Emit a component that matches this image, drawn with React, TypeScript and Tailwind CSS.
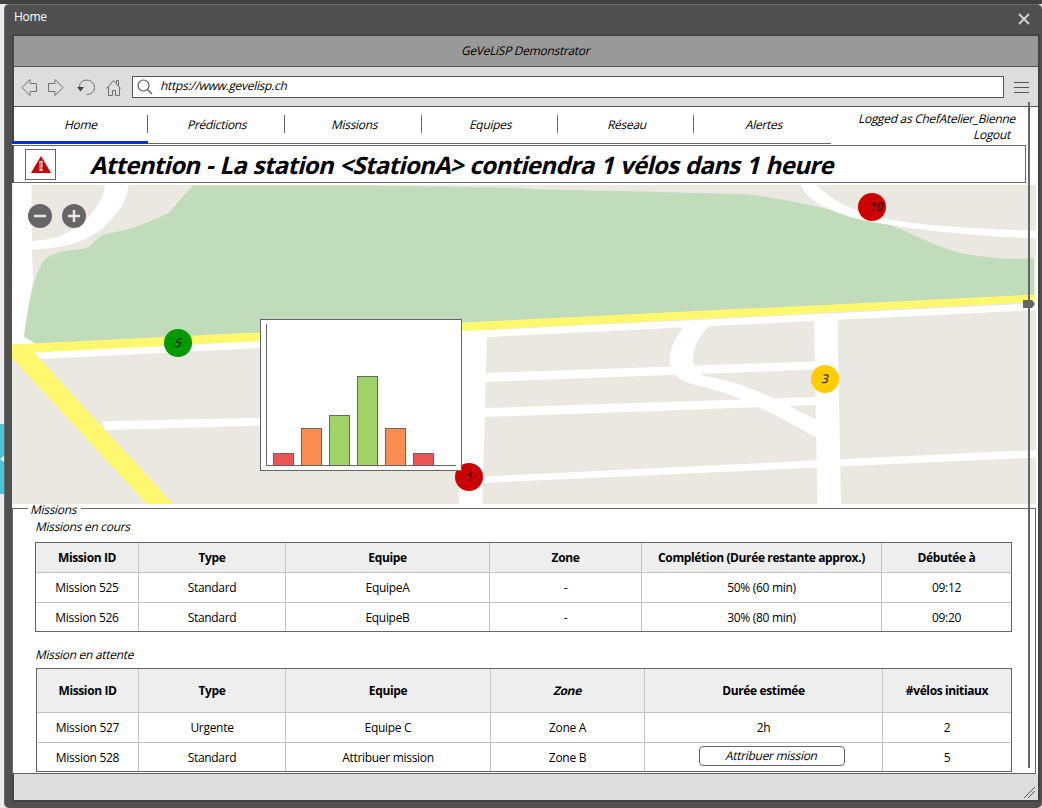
import { type ReactNode } from 'react';

function Slant({ children, className = '' }: { children: ReactNode; className?: string }) {
  return <span className={`inline-block -skew-x-[14deg] whitespace-nowrap ${className}`}>{children}</span>;
}

const tabs = [
  { label: 'Home', box: 'w-[136px]' },
  { label: 'Prédictions', box: 'w-[137px]' },
  { label: 'Missions', box: 'w-[137px]' },
  { label: 'Equipes', box: 'w-[136px]' },
  { label: 'Réseau', box: 'w-[136px]' },
  { label: 'Alertes', box: 'w-[137px]' },
];

const current = {
  widths: ['w-[103px]', 'w-[147px]', 'w-[204px]', 'w-[152px]', 'w-[240px]', 'w-[129px]'],
  head: ['Mission ID', 'Type', 'Equipe', 'Zone', 'Complétion (Durée restante approx.)', 'Débutée à'],
  rows: [
    ['Mission 525', 'Standard', 'EquipeA', '-', '50% (60 min)', '09:12'],
    ['Mission 526', 'Standard', 'EquipeB', '-', '30% (80 min)', '09:20'],
  ],
};

const attribute = (
  <button className="-mt-[5px] ml-[16px] flex h-[20px] w-[146px] items-center justify-center rounded-[4px] border border-[#666] bg-white pt-px">
    <Slant>Attribuer mission</Slant>
  </button>
);

const waiting = {
  widths: ['w-[102px]', 'w-[147px]', 'w-[205px]', 'w-[154px]', 'w-[238px]', 'w-[128px]'],
  head: ['Mission ID', 'Type', 'Equipe', <Slant key="zone">Zone</Slant>, 'Durée estimée', '#vélos initiaux'],
  rows: [
    ['Mission 527', 'Urgente', 'Equipe C', 'Zone A', '2h', '2'],
    ['Mission 528', 'Standard', 'Attribuer mission', 'Zone B', attribute, '5'],
  ],
};

type TableProps = { widths: string[]; head: ReactNode[]; rows: ReactNode[][]; headHeight: string };

function Table({ widths, head, rows, headHeight }: TableProps) {
  const cell = (i: number) =>
    `flex shrink-0 items-center justify-center whitespace-nowrap ${widths[i]} ${i < widths.length - 1 ? 'border-r border-[#c3c3c3]' : ''}`;
  return (
    <div className="w-fit border border-[#666] bg-white">
      <div className={`flex border-b border-[#c3c3c3] bg-[#eee] font-bold tracking-[-0.38px] ${headHeight}`}>
        {head.map((h, i) => (
          <div key={i} className={cell(i)}>{h}</div>
        ))}
      </div>
      {rows.map((r, n) => (
        <div key={n} className={`flex ${n < rows.length - 1 ? 'h-[30px] border-b border-[#c3c3c3]' : 'h-[28px]'}`}>
          {r.map((c, i) => (
            <div key={i} className={`${cell(i)} ${n === rows.length - 1 ? 'pt-[2px]' : ''}`}>{c}</div>
          ))}
        </div>
      ))}
    </div>
  );
}

function Map() {
  return (
    <svg className="block h-[320px] w-[1024px]" viewBox="12 184 1024 320">
      <rect x="12" y="184" width="1024" height="320" fill="#fff" />
      <rect x="12" y="185" width="1024" height="319" fill="#ebe8e1" />
      <path d="M13 184H31.5L32 250L33 280L24 337L37 345L12 347Z" fill="#fff" />
      <path d="M105 184C105 200 90 217 78 226C65 236 50 240 31 241V249.500C60 249 85 243 104 227C118 214 128 200 128.500 184Z" fill="#fff" />
      <path d="M193 185.500L168 213.500C150 221 138 227 123 230.500C112 233 105 232 97 239C92 243 90 247 85 248.500C75 250 65 250 58 253C48 256 44 258 40 267C33 282 28 305 24 336.500L37 344L1034.500 295V258C1010 260 985 258 961 253C925 244 908 228 860 216L800 203C785 200 770 197 750 194.500L640 191.500L545 189.500C500 186.500 460 187.500 370 185.500Z" fill="#c1dcba" />
      <path d="M801 184.500C805 201 835 213 858 219C905 229 960 235 1036 238.500V230.500C970 229 920 225 886 219C855 212 830 200 816 184.500Z" fill="#fff" />
      <path d="M32 352L1036 303.500V310L40 359Z" fill="#fff" />
      <path d="M102 421.500L462 413V420L105 430Z" fill="#fff" />
      <path d="M462 330H487L482.500 504H459Z" fill="#fff" />
      <path d="M814 318H837.500L841 504H817.500Z" fill="#fff" />
      <path d="M484 373L816 361.500V369.500L484 382Z" fill="#fff" />
      <path d="M484 408L817 397V405L484 417Z" fill="#fff" />
      <path d="M482 476.500L1036 450V457.500L482 483Z" fill="#fff" />
      <path d="M684 327C674 339 668 352 670 364C673 378 684 382 700 386C748 397 785 421 817 438V420C785 405 756 385 705 376C697 374 693 366 693 359C693 346 700 335 711 324Z" fill="#fff" />
      <path d="M12 344.500L1036 294.500V302L34 352.500L173 504H147L12 358Z" fill="#fff86f" />
      <rect x="1034.500" y="256" width="1.500" height="55" fill="#fff" opacity=".6" />
    </svg>
  );
}

function Pin({ place, color, value, shift = '' }: { place: string; color: string; value: string; shift?: string }) {
  return (
    <div className={`absolute flex size-[28px] items-center justify-center rounded-full ${place} ${color}`}>
      <Slant className={shift}>{value}</Slant>
    </div>
  );
}

const bars = [
  'h-[13px] bg-[#ed5353]',
  'h-[38px] bg-[#fb8d52]',
  'h-[51px] bg-[#a0d468]',
  'h-[90px] bg-[#a0d468]',
  'h-[38px] bg-[#fb8d52]',
  'h-[13px] bg-[#ed5353]',
];

function Chart() {
  return (
    <div className="absolute left-[248px] top-[135px] h-[152px] w-[202px] border border-[#666] bg-white pl-[5px] pt-[4px]">
      <div className="flex h-[142px] w-[190px] items-end gap-[7px] border-b border-l border-[#666] pl-[6px]">
        {bars.map((b, i) => (
          <div key={i} className={`-mb-px w-[21px] border border-[#666] ${b}`} />
        ))}
      </div>
    </div>
  );
}

export default function App() {
  return (
    <div className="flex h-[808px] w-[1042px] flex-col overflow-hidden bg-[#404040] font-['Open_Sans',sans-serif] text-[12px] leading-[16px] tracking-[-0.3px] text-black">
      <div className="h-[4px] shrink-0" />
      <div className="flex h-[804px] bg-[#ebebed]">
        <div className="w-[4px] shrink-0 pt-[420px]">
          <div className="flex h-[70px] items-center bg-[#45c6d8]">
            <svg className="h-[6px] w-[4px]" viewBox="0 0 4 6"><path d="M4 0V6L0 3Z" fill="#fff" /></svg>
          </div>
        </div>
        <div className="relative flex w-[1038px] flex-col rounded-[5px] border-l border-t border-[#6b6b6b] bg-[#505050] pl-[7px]">
          <header className="flex h-[29px] shrink-0 items-center justify-between pl-[2px] pr-[12px] text-white">
            <span className="-mt-[5px] tracking-[-0.3px]">Home</span>
            <svg className="-mt-px size-[12px]" viewBox="0 0 12 12"><path d="M1 1L11 11M11 1L1 11" stroke="#d0d0d0" strokeWidth="2" /></svg>
          </header>

          <div className="h-[110px] w-[1028px] shrink-0 border-x-2 border-t-2 border-[#444] bg-white">
            <div className="flex h-[31px] items-center justify-center border-b border-[#555] bg-[#999]">
              <Slant>GeVeLiSP Demonstrator</Slant>
            </div>
            <div className="flex h-[40px] items-center border-b border-[#555] bg-[#ddd]">
              <svg className="ml-[7px] h-[20px] w-[105px] shrink-0" viewBox="21 77 105 20" fill="none" stroke="#707070">
                <path d="M22 87.500L30 79.500V83.500H36.500V91.500H30V95.500Z" />
                <path d="M63 87.500L55 79.500V83.500H48.500V91.500H55V95.500Z" />
                <path d="M79.500 87C79.500 77.500 94.500 78 94.500 87.500C94.500 92 91 94.500 86.500 94.500" />
                <path d="M77 87H84L80.500 91.500Z" fill="#444" stroke="none" />
                <path d="M106.500 88.500L113.500 80.500L120.500 88.500M116.500 83.500V80.500H118.500V86M108.500 87V95.500H112.500V90.500H115.500V95.500H119.500V87" />
              </svg>
              <div className="ml-[6px] flex h-[22px] w-[872px] items-center border border-[#555] bg-white">
                <svg className="ml-[4px] size-[16px]" viewBox="0 0 16 16" fill="none" stroke="#555" strokeWidth="1.200">
                  <circle cx="6.500" cy="6.500" r="5.500" /><path d="M10.500 10.500L15 15" />
                </svg>
                <Slant className="-mt-[2px] ml-[8px]">https://www.gevelisp.ch</Slant>
              </div>
              <div className="ml-[10px] mt-[2px] flex flex-col gap-[4px]">
                <div className="h-px w-[15px] bg-[#555]" />
                <div className="h-px w-[15px] bg-[#555]" />
                <div className="h-px w-[15px] bg-[#555]" />
              </div>
            </div>
            <div className="-ml-[2px] flex h-[37px] w-[1026px] justify-between">
              <nav className="flex h-[37px] w-[819px]">
                {tabs.map((t, i) => (
                  <div key={t.label} className={`h-[37px] pt-[8px] ${t.box} ${i === 0 ? 'border-b-[3px] border-[#0033cc]' : 'border-b border-[#666]'}`}>
                    <div className={`flex h-[18px] items-center justify-center pl-[4px] pt-px ${i < 5 ? 'border-r border-[#666]' : ''}`}>
                      <Slant>{t.label}</Slant>
                    </div>
                  </div>
                ))}
              </nav>
              <div className="pr-[22px] pt-[4px] text-right">
                <Slant className="block">Logged as ChefAtelier_Bienne</Slant>
                <Slant className="mr-[5px] block">Logout</Slant>
              </div>
            </div>
          </div>

          <main className="flex h-[630px] w-[1028px] shrink-0 flex-col border-r-2 border-[#444] bg-white">
            <div className="mt-px h-[38px] shrink-0 border-l border-[#444]">
              <div className="flex h-[38px] w-[1013px] items-center border border-[#666]">
                <div className="ml-[11px] flex size-[31px] items-center justify-center border border-[#666]">
                  <svg className="h-[17px] w-[20px]" viewBox="0 0 20 17">
                    <path d="M10 0L20 17H0Z" fill="#c00" />
                    <path d="M8.500 5H11.500V11.500H8.500ZM8.500 12.500H11.500V15H8.500Z" fill="#fff" />
                    <path d="M9.500 6H10.500V10.500H9.500Z" fill="#c00" />
                  </svg>
                </div>
                <h1 className="ml-[36px] mt-[2px] whitespace-nowrap text-[24px] font-bold leading-[32px] tracking-[-0.7px] [word-spacing:1px]">
                  <Slant>Attention - La station &lt;StationA&gt; contiendra 1 vélos dans 1 heure</Slant>
                </h1>
              </div>
            </div>

            <section className="relative mt-px h-[320px] shrink-0">
              <Map />
              <div className="absolute left-[16px] top-[20px] flex gap-[10px]">
                <svg className="size-[24px]" viewBox="0 0 24 24"><circle cx="12" cy="12" r="12" fill="#666" /><path d="M6 12H18" stroke="#ebe8e1" strokeWidth="2.500" /></svg>
                <svg className="size-[24px]" viewBox="0 0 24 24"><circle cx="12" cy="12" r="12" fill="#666" /><path d="M6 12H18M12 6V18" stroke="#ebe8e1" strokeWidth="2.500" /></svg>
              </div>
              <Pin place="left-[152px] top-[145px]" color="bg-[#090]" value="5" />
              <Pin place="left-[846px] top-[9px]" color="bg-[#c00]" value="10" shift="ml-[10px]" />
              <Pin place="left-[799px] top-[181px]" color="bg-[#fc0]" value="3" />
              <Pin place="left-[443px] top-[279px]" color="bg-[#c00]" value="1" />
              <Chart />
            </section>

            <section className="mt-[4px] h-[266px] w-[1024px] shrink-0 border border-[#666]">
              <div className="-mt-[7px] ml-[15px] w-[53px] bg-white pl-[3px]"><Slant>Missions</Slant></div>
              <div className="ml-[23px] mt-[1px]"><Slant>Missions en cours</Slant></div>
              <div className="ml-[22px] mt-[7px]"><Table {...current} headHeight="h-[30px]" /></div>
              <div className="ml-[23px] mt-[15px]"><Slant>Mission en attente</Slant></div>
              <div className="ml-[23px] mt-[5px]"><Table {...waiting} headHeight="h-[44px]" /></div>
            </section>
          </main>

          <footer className="flex h-[28px] w-[1028px] shrink-0 items-end justify-end border-x-2 border-b-2 border-[#444] bg-[#ddd]">
            <svg className="mb-[2px] mr-[2px] size-[12px]" viewBox="0 0 12 12" stroke="#555" fill="none"><path d="M0 12L11 1M4 12L11 5" /></svg>
          </footer>

          <div className="absolute left-[1023px] top-[97px] h-[666px] w-[2px] bg-[#666]" />
          <svg className="absolute left-[1018px] top-[295px] h-[8px] w-[12px]" viewBox="0 0 12 8"><path d="M0 0H9L12 4L9 8H0Z" fill="#666" /></svg>
        </div>
      </div>
    </div>
  );
}
